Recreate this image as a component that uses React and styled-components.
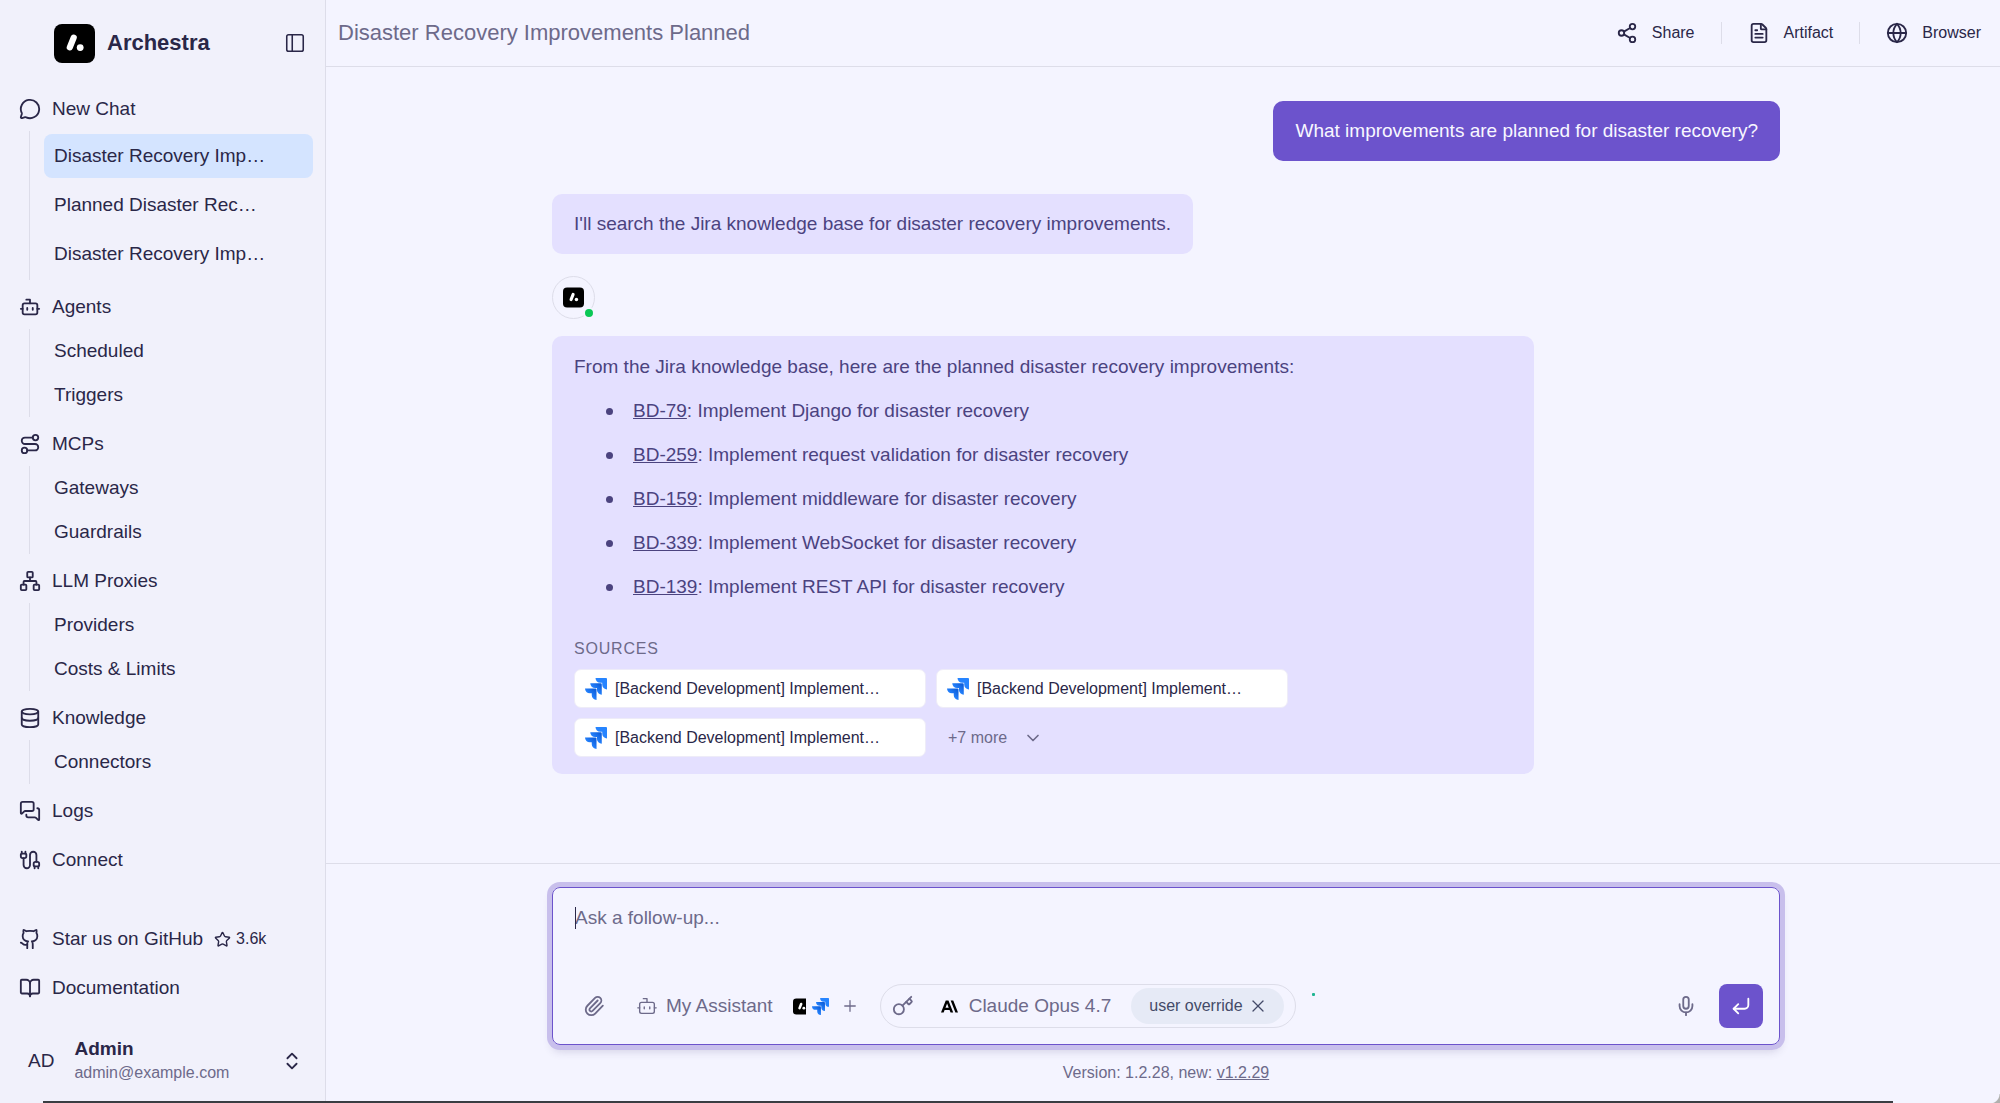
import React, { useState } from 'react';
import styled, { createGlobalStyle, css } from 'styled-components';
import {
  BookOpen,
  Bot,
  Cable,
  ChevronDown,
  ChevronsUpDown,
  CornerDownLeft,
  Database,
  FileText,
  Github,
  Globe,
  Key,
  MessageCircle,
  MessagesSquare,
  Mic,
  Network,
  PanelLeft,
  Paperclip,
  Plus,
  Route,
  Share2,
  Star,
  X,
} from 'lucide-react';
import { SiAnthropic } from 'react-icons/si';

const colors = {
  page: '#f4f4ff',
  sidebar: '#f1f1fb',
  border: '#dddde9',
  text: '#2a2748',
  muted: '#6d6a8a',
  purple: '#6c53cc',
  bubble: '#e4e0ff',
  bubbleText: '#4b437f',
  active: '#d4e4ff',
};

const GlobalStyle = createGlobalStyle`
  *, *::before, *::after {
    box-sizing: border-box;
  }

  body {
    margin: 0;
    background-color: ${colors.page};
    color: ${colors.text};
    font-family: "Liberation Sans", Helvetica, Arial, sans-serif;
    font-size: 19px;
    line-height: 28px;
  }

  a {
    color: inherit;
  }

  button, textarea {
    font: inherit;
    color: inherit;
    border: none;
    background: none;
    margin: 0;
    padding: 0;
  }

  button {
    cursor: pointer;
  }

  ul {
    list-style: none;
    margin: 0;
    padding: 0;
  }

  svg {
    flex-shrink: 0;
    display: block;
  }
`;

const Layout = styled.div`
  display: flex;
  min-height: 100vh;
`;

/* Sidebar */

const Sidebar = styled.aside`
  display: flex;
  flex-direction: column;
  flex-shrink: 0;
  width: 326px;
  padding: 22px 12px 14px;
  background-color: ${colors.sidebar};
  border-right: 1px solid ${colors.border};
`;

const Brand = styled.div`
  display: flex;
  align-items: center;
  gap: 12px;
  height: 42px;
  margin-bottom: 23px;
  padding: 0 7px 0 42px;
`;

const BrandName = styled.span`
  flex: 1;
  font-size: 22px;
  font-weight: bold;
`;

const Nav = styled.nav`
  display: flex;
  flex-direction: column;
  gap: 5px;
`;

const BottomNav = styled(Nav)`
  margin-top: auto;
  margin-bottom: 22px;
`;

const NavLink = styled.a`
  display: flex;
  align-items: center;
  gap: 11px;
  height: 44px;
  padding: 0 7px;
  text-decoration: none;
`;

const StarCount = styled.span`
  display: flex;
  align-items: center;
  gap: 5px;
  font-size: 16px;
`;

const SubList = styled.ul`
  display: flex;
  flex-direction: column;
  margin-left: 17px;
  padding-left: 14px;
  border-left: 1px solid ${colors.border};

  ${props =>
    props.$spaced &&
    css`
      gap: 5px;
      padding-top: 3px;
      padding-bottom: 4px;
    `}
`;

const SubLink = styled.a`
  display: flex;
  align-items: center;
  height: 44px;
  padding: 0 10px;
  border-radius: 8px;
  text-decoration: none;
  white-space: nowrap;
  background-color: ${props => (props.$active ? colors.active : 'transparent')};
`;

const UserButton = styled.button`
  display: flex;
  align-items: center;
  gap: 20px;
  padding: 4px 10px 4px 16px;
  text-align: left;
`;

const UserInfo = styled.span`
  display: flex;
  flex-direction: column;
  flex: 1;
  line-height: 25px;
`;

const UserEmail = styled.span`
  font-size: 16px;
  line-height: 24px;
  color: ${colors.muted};
`;

/* Main column */

const Main = styled.main`
  display: flex;
  flex-direction: column;
  flex: 1;
  min-width: 0;
`;

const Header = styled.header`
  display: flex;
  align-items: center;
  justify-content: space-between;
  height: 67px;
  padding: 0 19px 0 12px;
  border-bottom: 1px solid ${colors.border};
`;

const Title = styled.h1`
  margin: 0;
  font-size: 22px;
  font-weight: normal;
  color: ${colors.muted};
`;

const Actions = styled.div`
  display: flex;
  align-items: center;
  gap: 26px;
`;

const ActionButton = styled.button`
  display: flex;
  align-items: center;
  gap: 14px;
  font-size: 16px;
`;

const Divider = styled.span`
  width: 1px;
  height: 22px;
  background-color: ${colors.border};
`;

const Column = styled.div`
  width: 100%;
  max-width: 1234px;
  margin: 0 auto;
  padding-left: 6px;
`;

const Conversation = styled(Column)`
  display: flex;
  flex-direction: column;
  align-items: flex-start;
  flex: 1;
  padding-top: 34px;
`;

const Bubble = styled.div`
  padding: 16px 22px;
  border-radius: 10px;
  background-color: ${colors.bubble};
  color: ${colors.bubbleText};
`;

const UserBubble = styled(Bubble)`
  align-self: flex-end;
  margin-bottom: 33px;
  background-color: ${colors.purple};
  color: #f8f7ff;
`;

const Avatar = styled.div`
  position: relative;
  display: flex;
  align-items: center;
  justify-content: center;
  width: 43px;
  height: 43px;
  margin: 22px 0 17px;
  border: 1px solid ${colors.border};
  border-radius: 50%;
`;

const OnlineDot = styled.span`
  position: absolute;
  right: -1px;
  bottom: -1px;
  width: 12px;
  height: 12px;
  border: 2px solid ${colors.page};
  border-radius: 50%;
  background-color: #0ac755;
`;

const Answer = styled(Bubble)`
  width: 80%;
  padding: 17px 22px;
`;

const IssueList = styled.ul`
  display: flex;
  flex-direction: column;
  gap: 16px;
  margin: 16px 0 36px;
  padding-left: 32px;
`;

const Issue = styled.li`
  &::before {
    content: '';
    display: inline-block;
    width: 7px;
    height: 7px;
    margin-right: 20px;
    border-radius: 50%;
    background-color: ${colors.bubbleText};
    vertical-align: middle;
  }
`;

const SourcesLabel = styled.h2`
  margin: 0 0 8px;
  font-size: 16px;
  font-weight: normal;
  line-height: 24px;
  letter-spacing: 0.05em;
  text-transform: uppercase;
  color: ${colors.muted};
`;

const Sources = styled.div`
  display: flex;
  flex-wrap: wrap;
  gap: 10px;
  max-width: 740px;
`;

const SourceChip = styled.a`
  display: flex;
  align-items: center;
  gap: 8px;
  width: 352px;
  height: 39px;
  padding: 0 10px;
  border: 1px solid #eeecf8;
  border-radius: 7px;
  background-color: #fff;
  color: ${colors.text};
  font-size: 16px;
  text-decoration: none;
`;

const MoreButton = styled.button`
  display: flex;
  align-items: center;
  gap: 16px;
  height: 39px;
  padding: 0 12px;
  font-size: 16px;
  color: ${colors.muted};
`;

/* Composer */

const Footer = styled.footer`
  height: 240px;
  padding-top: 23px;
  border-top: 1px solid ${colors.border};
`;

const Composer = styled.form`
  position: relative;
  display: flex;
  flex-direction: column;
  height: 158px;
  padding: 16px 16px 16px 19px;
  border: 1px solid ${colors.purple};
  border-radius: 8px;
  box-shadow: 0 0 0 5px #c8bfec, 0 6px 10px rgba(60, 50, 110, 0.2);
`;

const Prompt = styled.textarea`
  display: block;
  flex: 1;
  width: 100%;
  padding-left: 3px;
  resize: none;
  outline: none;
  caret-color: transparent;

  &::placeholder {
    color: ${colors.muted};
    opacity: 1;
  }
`;

const Caret = styled.span`
  position: absolute;
  top: 19px;
  left: 22px;
  width: 1px;
  height: 22px;
  background-color: ${colors.text};
`;

const Toolbar = styled.div`
  display: flex;
  align-items: center;
  color: ${colors.muted};
`;

const IconButton = styled.button`
  display: flex;
  align-items: center;
  justify-content: center;
  width: 44px;
  height: 44px;
`;

const AgentButton = styled.button`
  display: flex;
  align-items: center;
  gap: 8px;
  margin-left: 20px;
`;

const Tools = styled.button`
  display: flex;
  align-items: center;
  gap: 6px;
  margin-left: 20px;
`;

const ClippedLogo = styled.span`
  width: 13px;
  overflow: hidden;
`;

const AddTool = styled.span`
  margin-left: 6px;
`;

const ModelPill = styled.div`
  display: flex;
  align-items: center;
  height: 44px;
  margin-left: 21px;
  padding: 0 11px;
  border: 1px solid ${colors.border};
  border-radius: 22px;
`;

const ModelButton = styled.button`
  display: flex;
  align-items: center;
  gap: 11px;
  margin: 0 20px 0 27px;
`;

const Override = styled.span`
  display: flex;
  align-items: center;
  gap: 5px;
  height: 36px;
  padding: 0 16px 0 18px;
  border-radius: 18px;
  background-color: #e6eaf6;
  color: #444a68;
  font-size: 16px;
`;

const ContextRing = styled.svg`
  margin-left: 6px;
`;

const SendButton = styled(IconButton)`
  margin-left: 11px;
  border-radius: 8px;
  background-color: ${colors.purple};
  color: #fff;
`;

const MicButton = styled(IconButton)`
  margin-left: auto;
`;

const Version = styled.p`
  margin: 16px 0 0;
  font-size: 16px;
  line-height: 24px;
  text-align: center;
  color: ${colors.muted};
`;

const WindowEdge = styled.div`
  position: fixed;
  right: 107px;
  bottom: 0;
  left: 43px;
  height: 2px;
  background-color: #3a3d42;
`;

const WindowCorner = styled.div`
  position: fixed;
  right: 0;
  bottom: 0;
  width: 10px;
  height: 9px;
  background: radial-gradient(circle at 0 0, transparent 9px, #b0b0ae 10px);
`;

const ArchestraLogo = ({ size }) => (
  <svg width={size} height={size} viewBox="0 0 41 41" aria-hidden="true">
    <rect y="1" width="41" height="39" rx="8" fill="#000" />
    <path d="M19.7 14.6 15.8 24.4" stroke="#fff" strokeWidth="6.2" strokeLinecap="round" />
    <circle cx="26.2" cy="24.6" r="3.4" fill="#fff" />
  </svg>
);

const JiraLogo = ({ size, id }) => (
  <svg width={size} height={size} viewBox="0 0 24 24" aria-hidden="true">
    <defs>
      <linearGradient id={`${id}-a`} x1="0.95" y1="0.05" x2="0.4" y2="0.6">
        <stop offset="0.18" stopColor="#0f60dc" />
        <stop offset="1" stopColor="#2684ff" />
      </linearGradient>
    </defs>
    <path
      fill="#2684ff"
      d="M23.013 0H11.455a5.215 5.215 0 0 0 5.215 5.215h2.129v2.057A5.215 5.215 0 0 0 24 12.483V1.005A1.001 1.001 0 0 0 23.013 0Z"
    />
    <path
      fill={`url(#${id}-a)`}
      d="M17.294 5.757H5.736a5.215 5.215 0 0 0 5.215 5.214h2.129v2.058a5.218 5.218 0 0 0 5.215 5.214V6.758a1.001 1.001 0 0 0-1.001-1.001Z"
    />
    <path
      fill={`url(#${id}-a)`}
      d="M11.571 11.513H0a5.218 5.218 0 0 0 5.232 5.215h2.13v2.057A5.215 5.215 0 0 0 12.575 24V12.518a1.005 1.005 0 0 0-1.005-1.005Z"
    />
  </svg>
);

const chats = ['Disaster Recovery Imp…', 'Planned Disaster Rec…', 'Disaster Recovery Imp…'];

const sections = [
  { label: 'Agents', icon: Bot, items: ['Scheduled', 'Triggers'] },
  { label: 'MCPs', icon: Route, items: ['Gateways', 'Guardrails'] },
  { label: 'LLM Proxies', icon: Network, items: ['Providers', 'Costs & Limits'] },
  { label: 'Knowledge', icon: Database, items: ['Connectors'] },
  { label: 'Logs', icon: MessagesSquare, items: [] },
  { label: 'Connect', icon: Cable, items: [] },
];

const issues = [
  { key: 'BD-79', summary: 'Implement Django for disaster recovery' },
  { key: 'BD-259', summary: 'Implement request validation for disaster recovery' },
  { key: 'BD-159', summary: 'Implement middleware for disaster recovery' },
  { key: 'BD-339', summary: 'Implement WebSocket for disaster recovery' },
  { key: 'BD-139', summary: 'Implement REST API for disaster recovery' },
];

const sources = ['source-1', 'source-2', 'source-3'];

const SideMenu = () => (
  <Sidebar>
    <Brand>
      <ArchestraLogo size={41} />
      <BrandName>Archestra</BrandName>
      <button type="button" aria-label="Toggle sidebar">
        <PanelLeft size={22} strokeWidth={1.7} />
      </button>
    </Brand>
    <Nav>
      <div>
        <NavLink href="#new">
          <MessageCircle size={22} />
          New Chat
        </NavLink>
        <SubList $spaced>
          {chats.map((chat, index) => (
            <li key={index}>
              <SubLink href="#chat" $active={index === 0}>
                {chat}
              </SubLink>
            </li>
          ))}
        </SubList>
      </div>
      {sections.map(({ label, icon: Icon, items }) => (
        <div key={label}>
          <NavLink href="#section">
            <Icon size={22} />
            {label}
          </NavLink>
          {items.length > 0 && (
            <SubList>
              {items.map(item => (
                <li key={item}>
                  <SubLink href="#item">{item}</SubLink>
                </li>
              ))}
            </SubList>
          )}
        </div>
      ))}
    </Nav>
    <BottomNav>
      <NavLink href="#github">
        <Github size={22} />
        Star us on GitHub
        <StarCount>
          <Star size={17} />
          3.6k
        </StarCount>
      </NavLink>
      <NavLink href="#docs">
        <BookOpen size={22} />
        Documentation
      </NavLink>
    </BottomNav>
    <UserButton type="button">
      <span>AD</span>
      <UserInfo>
        <strong>Admin</strong>
        <UserEmail>admin@example.com</UserEmail>
      </UserInfo>
      <ChevronsUpDown size={22} />
    </UserButton>
  </Sidebar>
);

const ChatHeader = () => (
  <Header>
    <Title>Disaster Recovery Improvements Planned</Title>
    <Actions>
      <ActionButton type="button">
        <Share2 size={22} />
        Share
      </ActionButton>
      <Divider />
      <ActionButton type="button">
        <FileText size={22} />
        Artifact
      </ActionButton>
      <Divider />
      <ActionButton type="button">
        <Globe size={22} />
        Browser
      </ActionButton>
    </Actions>
  </Header>
);

const ChatComposer = () => {
  const [prompt, setPrompt] = useState('');

  return (
    <Composer onSubmit={event => event.preventDefault()}>
      <Prompt
        aria-label="Message"
        placeholder="Ask a follow-up..."
        value={prompt}
        onChange={event => setPrompt(event.target.value)}
      />
      <Caret />
      <Toolbar>
        <IconButton type="button" aria-label="Attach file">
          <Paperclip size={22} />
        </IconButton>
        <AgentButton type="button">
          <Bot size={22} strokeWidth={1.5} />
          My Assistant
        </AgentButton>
        <Tools type="button" aria-label="Tools">
          <ClippedLogo>
            <ArchestraLogo size={17} />
          </ClippedLogo>
          <JiraLogo size={17} id="tool" />
          <AddTool>
            <Plus size={18} strokeWidth={1.7} />
          </AddTool>
        </Tools>
        <ModelPill>
          <button type="button" aria-label="API key">
            <Key size={22} />
          </button>
          <ModelButton type="button">
            <SiAnthropic size={17} color="#000" />
            Claude Opus 4.7
          </ModelButton>
          <Override>
            user override
            <button type="button" aria-label="Remove override">
              <X size={20} strokeWidth={1.5} />
            </button>
          </Override>
        </ModelPill>
        <ContextRing width="24" height="30" viewBox="0 0 24 30">
          <rect x="10" y="2" width="3" height="3" rx="1" fill="#1fb592" />
        </ContextRing>
        <MicButton type="button" aria-label="Dictate">
          <Mic size={22} />
        </MicButton>
        <SendButton type="submit" aria-label="Send">
          <CornerDownLeft size={22} />
        </SendButton>
      </Toolbar>
    </Composer>
  );
};

const App = () => (
  <>
    <GlobalStyle />
    <Layout>
      <SideMenu />
      <Main>
        <ChatHeader />
        <Conversation>
          <UserBubble>What improvements are planned for disaster recovery?</UserBubble>
          <Bubble>I'll search the Jira knowledge base for disaster recovery improvements.</Bubble>
          <Avatar>
            <ArchestraLogo size={21} />
            <OnlineDot />
          </Avatar>
          <Answer>
            From the Jira knowledge base, here are the planned disaster recovery improvements:
            <IssueList>
              {issues.map(({ key, summary }) => (
                <Issue key={key}>
                  <a href="#issue">{key}</a>: {summary}
                </Issue>
              ))}
            </IssueList>
            <SourcesLabel>Sources</SourcesLabel>
            <Sources>
              {sources.map(source => (
                <SourceChip key={source} href="#source">
                  <JiraLogo size={22} id={source} />
                  [Backend Development] Implement…
                </SourceChip>
              ))}
              <MoreButton type="button">
                +7 more
                <ChevronDown size={20} />
              </MoreButton>
            </Sources>
          </Answer>
        </Conversation>
        <Footer>
          <Column>
            <ChatComposer />
            <Version>
              Version: 1.2.28, new: <a href="#release">v1.2.29</a>
            </Version>
          </Column>
        </Footer>
      </Main>
    </Layout>
    <WindowEdge />
    <WindowCorner />
  </>
);

export default App;
